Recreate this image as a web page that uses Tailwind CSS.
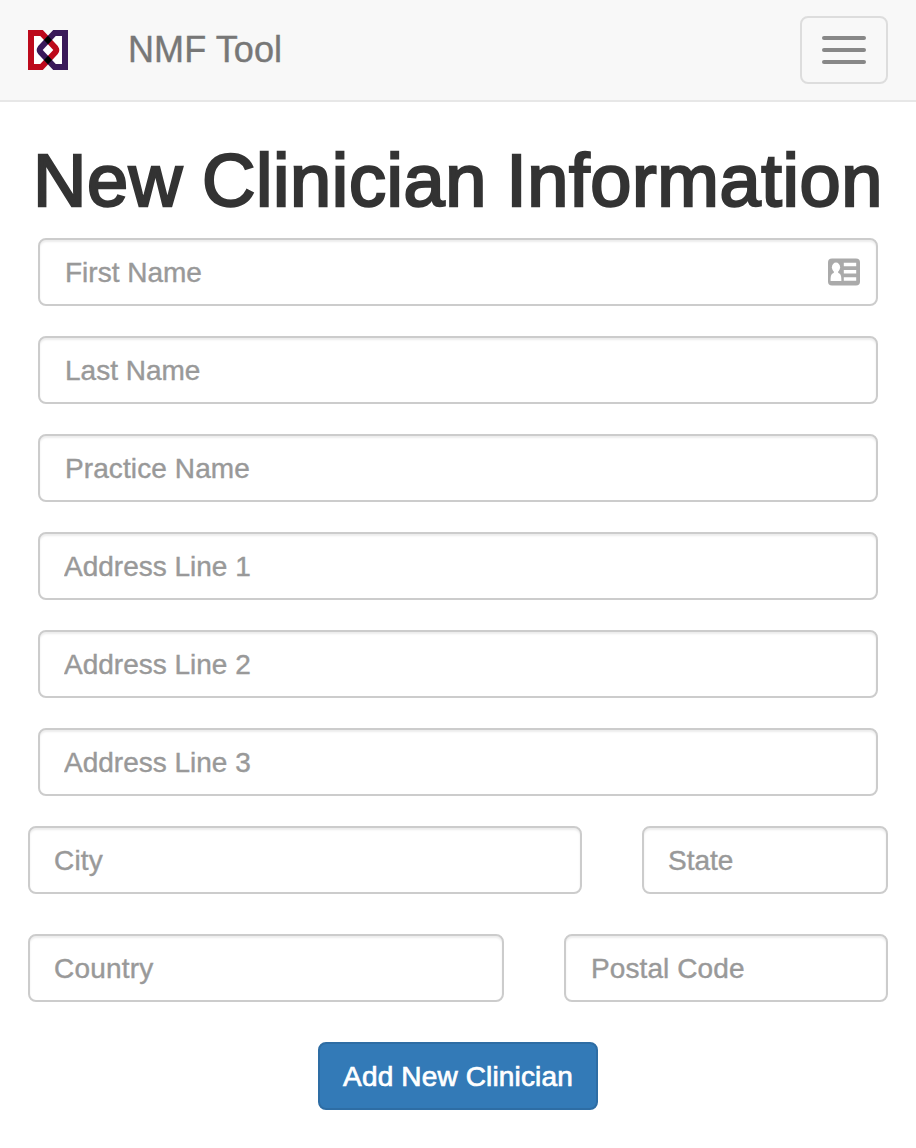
<!DOCTYPE html>
<html lang="en">
<head>
<meta charset="utf-8">
<title>NMF Tool</title>
<script src="https://cdn.jsdelivr.net/npm/@tailwindcss/browser@4"></script>
</head>
<body class="bg-white font-['Liberation_Sans',Arial,sans-serif] text-[#333] overflow-hidden">
<nav class="h-[102px] bg-[#f8f8f8] border-b-2 border-[#e7e7e7] flex items-center pl-7 pr-7">
  <svg class="w-10 h-10 shrink-0" viewBox="0 0 40 40" fill="none">
    <path d="M3 3H13.500L28.300 20L13.500 37H3Z" fill="#fff"/>
    <path d="M37 3H26.500L11.700 20L26.500 37H37Z" fill="#fff"/>
    <path d="M3 3H13.500L27.500 18Q29 20 27.500 22L13.500 37H3Z" stroke="#bd0a1c" stroke-width="6"/>
    <path d="M37 3H26.500L12.500 18Q11 20 12.500 22L26.500 37H37Z" stroke="#3a1a5a" stroke-width="6"/>
    <path d="M20 5.800L24 10L20 14.200L16 10ZM20 25.800L24 30L20 34.200L16 30Z" fill="#000"/>
  </svg>
  <span class="ml-[60px] text-[36px] leading-10 tracking-[0.1px] text-[#777] [-webkit-text-stroke:0.4px_#777]">NMF Tool</span>
  <button class="ml-auto w-[88px] h-[68px] border-2 border-[#ddd] rounded-lg flex flex-col items-center justify-center gap-2" aria-label="Menu">
    <span class="w-11 h-1 rounded-xs bg-[#888]"></span>
    <span class="w-11 h-1 rounded-xs bg-[#888]"></span>
    <span class="w-11 h-1 rounded-xs bg-[#888]"></span>
  </button>
</nav>
<main>
  <h1 class="pt-[39px] h-[136px] text-center text-[74px] leading-[80px] tracking-[0.6px] [word-spacing:-2px] whitespace-nowrap [-webkit-text-stroke:2.4px_#333]">New Clinician Information</h1>
  <form>
    <div class="flex flex-col gap-[30px] px-[38px]">
      <div class="relative flex">
        <input class="w-full h-[68px] pl-[25px] pr-6 pt-0.5 text-[28px] border-2 border-[#ccc] rounded-lg shadow-[inset_0_2px_2px_rgba(0,0,0,0.075)] placeholder:text-[#999] [-webkit-text-stroke:0.4px_#999]" placeholder="First Name">
        <svg class="absolute left-[790px] top-5 w-8 h-7" viewBox="0 0 32 28">
          <rect y=".5" width="32" height="27" rx="4" fill="#aaa"/>
          <ellipse cx="8" cy="9.300" rx="4.100" ry="4.800" fill="#fff"/>
          <path d="M5.800 12H10.200V15C13 15.800 13.400 18 13.400 23H2.600C2.600 18 3 15.800 5.800 15Z" fill="#fff"/>
          <path d="M15.800 6.500H28.200M15.800 13.700H28.200M15.800 21H28.200" stroke="#fff" stroke-width="3.400"/>
        </svg>
      </div>
      <input class="w-full h-[68px] pl-[25px] pr-6 pt-0.5 text-[28px] border-2 border-[#ccc] rounded-lg shadow-[inset_0_2px_2px_rgba(0,0,0,0.075)] placeholder:text-[#999] [-webkit-text-stroke:0.4px_#999]" placeholder="Last Name">
      <input class="w-full h-[68px] pl-[25px] pr-6 pt-0.5 text-[28px] tracking-[0.1px] border-2 border-[#ccc] rounded-lg shadow-[inset_0_2px_2px_rgba(0,0,0,0.075)] placeholder:text-[#999] [-webkit-text-stroke:0.4px_#999]" placeholder="Practice Name">
      <input class="w-full h-[68px] px-6 pt-0.5 text-[28px] border-2 border-[#ccc] rounded-lg shadow-[inset_0_2px_2px_rgba(0,0,0,0.075)] placeholder:text-[#999] [-webkit-text-stroke:0.4px_#999]" placeholder="Address Line 1">
      <input class="w-full h-[68px] px-6 pt-0.5 text-[28px] border-2 border-[#ccc] rounded-lg shadow-[inset_0_2px_2px_rgba(0,0,0,0.075)] placeholder:text-[#999] [-webkit-text-stroke:0.4px_#999]" placeholder="Address Line 2">
      <input class="w-full h-[68px] px-6 pt-0.5 text-[28px] border-2 border-[#ccc] rounded-lg shadow-[inset_0_2px_2px_rgba(0,0,0,0.075)] placeholder:text-[#999] [-webkit-text-stroke:0.4px_#999]" placeholder="Address Line 3">
    </div>
    <div class="mt-[30px] px-7 flex gap-[60px]">
      <input class="w-[554px] h-[68px] px-6 pt-0.5 text-[28px] tracking-[0.2px] border-2 border-[#ccc] rounded-lg shadow-[inset_0_2px_2px_rgba(0,0,0,0.075)] placeholder:text-[#999] [-webkit-text-stroke:0.4px_#999]" placeholder="City">
      <input class="w-[246px] h-[68px] px-6 pt-0.5 text-[28px] border-2 border-[#ccc] rounded-lg shadow-[inset_0_2px_2px_rgba(0,0,0,0.075)] placeholder:text-[#999] [-webkit-text-stroke:0.4px_#999]" placeholder="State">
    </div>
    <div class="mt-10 px-7 flex gap-[60px]">
      <input class="w-[476px] h-[68px] px-6 pt-0.5 text-[28px] tracking-[0.2px] border-2 border-[#ccc] rounded-lg shadow-[inset_0_2px_2px_rgba(0,0,0,0.075)] placeholder:text-[#999] [-webkit-text-stroke:0.4px_#999]" placeholder="Country">
      <input class="w-[324px] h-[68px] pl-[25px] pr-6 pt-0.5 text-[28px] tracking-[0.1px] border-2 border-[#ccc] rounded-lg shadow-[inset_0_2px_2px_rgba(0,0,0,0.075)] placeholder:text-[#999] [-webkit-text-stroke:0.4px_#999]" placeholder="Postal Code">
    </div>
    <div class="mt-10 flex justify-center">
      <button type="button" class="w-[280px] h-[68px] pt-0.5 bg-[#337ab7] border-2 border-[#2e6da4] rounded-lg text-white text-[28px] tracking-[0.15px] whitespace-nowrap [-webkit-text-stroke:0.7px_white]">Add New Clinician</button>
    </div>
  </form>
</main>
</body>
</html>
